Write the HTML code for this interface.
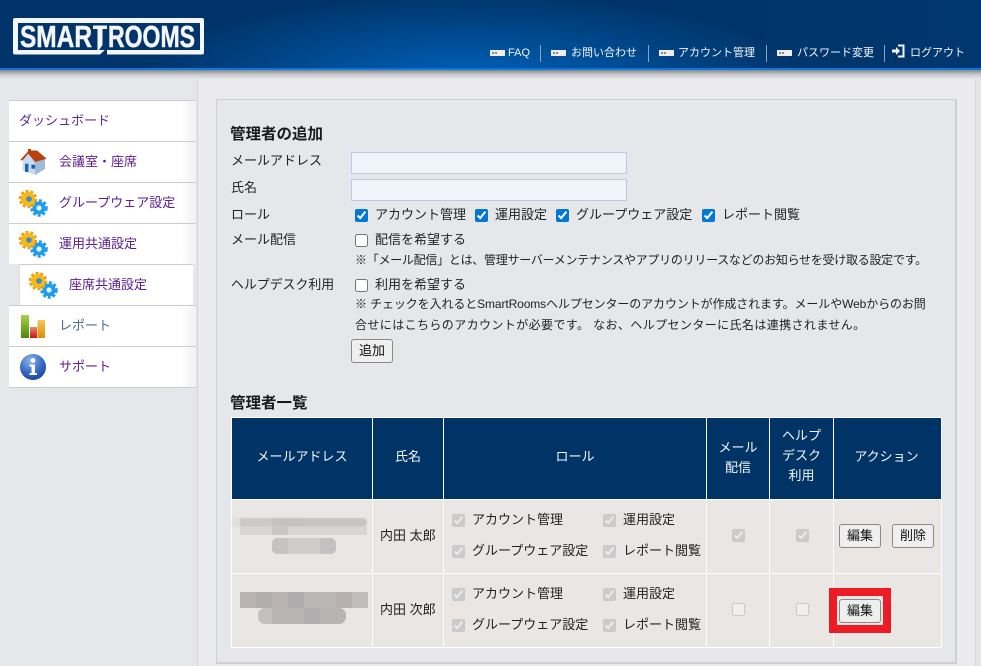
<!DOCTYPE html>
<html lang="ja"><head><meta charset="utf-8"><title>SmartRooms</title>
<style>
html,body{margin:0;padding:0;width:981px;height:666px;overflow:hidden;background:#e6e7eb}
body{position:relative;font-family:"Liberation Sans","Noto Sans CJK JP",sans-serif;font-size:13px;color:#222}
.a{position:absolute}
.t{position:absolute;white-space:nowrap;line-height:22px;height:22px}
#hd{left:0;top:0;width:981px;height:68px;background:radial-gradient(ellipse 330px 85px at 470px 80px,#0062b8 0%,#00529f 35%,rgba(0,56,108,0) 100%),linear-gradient(90deg,#00346a,#003468 60%,#00376e)}
#ln{left:0;top:68px;width:981px;height:2px;background:#0a78dc}
#sh{left:0;top:70px;width:981px;height:9px;background:linear-gradient(#85878b,#c8c9cd 50%,#e6e7eb)}
.nv{position:absolute;color:#f2f6fb;font-size:11px;line-height:16px;top:45px;white-space:nowrap}
.ic{position:absolute;top:50px;width:15px;height:6px;background:#eee}
.ic:before{content:"";position:absolute;left:2px;top:2px;width:2px;height:2px;background:#888;box-shadow:3px 0 #888}
.sp{position:absolute;top:45px;width:1px;height:17px;background:#8aa5c4}
.si{position:absolute;left:9px;width:187px;height:40px;background:linear-gradient(90deg,#fff 92%,#f1f1f3);border-top:1px solid #ccc}
.sl{position:absolute;color:#5b1a92;white-space:nowrap;line-height:22px;font-size:13px}
input{position:absolute;margin:0;width:13px;height:13px}
.in{position:absolute;left:351px;width:274px;height:20px;background:#f0f3f9;border:1px solid #bccbe2}
.b{position:absolute;width:40px;height:22px;border:1px solid #8a8a8a;border-radius:3px;background:#efefef;text-align:center;line-height:22px;font-size:13px;color:#111}
.c{position:absolute;text-align:center;color:#f3f6fa;font-size:13px;line-height:20px}
.v{position:absolute;background:#fff}
.h{position:absolute;background:#fff;left:231px;width:711px;height:1px}
.m{position:absolute}
</style></head><body>
<div class="a" style="left:197px;top:79px;width:778px;height:587px;background:#ebebee;border-left:1px solid #d6d6d9"></div>
<div class="a" style="left:975px;top:79px;width:6px;height:587px;background:#e4e5e9;border-left:1px solid #d8d8db"></div>
<div class="a" id="hd"></div><div class="a" id="ln"></div><div class="a" id="sh"></div>

<svg class="a" style="left:12px;top:17px" width="194" height="39" viewBox="0 0 194 39">
<rect x="1" y="1" width="191" height="36.5" rx="2" fill="#f4f6fa"/>
<rect x="6" y="6" width="182" height="27" fill="#00346a"/>
<text x="8" y="30" font-family="Liberation Sans" font-weight="bold" font-size="31" fill="#f4f6fa" stroke="#f4f6fa" stroke-width=".5" textLength="72" lengthAdjust="spacingAndGlyphs">SMAR</text>
<text x="96" y="30" font-family="Liberation Sans" font-weight="bold" font-size="31" fill="#f4f6fa" stroke="#f4f6fa" stroke-width=".5" textLength="87" lengthAdjust="spacingAndGlyphs">ROOMS</text>
<path d="M81 8H95V11.5H90.5V28Q90.5 33 85 35" stroke="none" fill="none"/>
<path d="M81 8.5H95V12H90.5V28L87 33H85.5V12H81Z" fill="#f4f6fa"/>
<path d="M88 37.5L95 31V37.5Z" fill="#00346a"/>
<path d="M84 33H90L86 37Z" fill="#f4f6fa"/>
</svg>

<div class="ic" style="left:490px"></div><div class="nv" style="left:508px">FAQ</div><div class="sp" style="left:540px"></div>
<div class="ic" style="left:551px"></div><div class="nv" style="left:571px">お問い合わせ</div><div class="sp" style="left:648px"></div>
<div class="ic" style="left:659px"></div><div class="nv" style="left:678px">アカウント管理</div><div class="sp" style="left:766px"></div>
<div class="ic" style="left:777px"></div><div class="nv" style="left:797px">パスワード変更</div><div class="sp" style="left:884px"></div>
<svg class="a" style="left:892px;top:44px" width="13" height="14" viewBox="0 0 13 14"><path d="M0 5.5H4V3L8 7 4 11V8.5H0Z" fill="#f2f6fb"/><path d="M6 1.5H11.5V12.5H6" stroke="#f2f6fb" stroke-width="2" fill="none"/></svg>
<div class="nv" style="left:910px">ログアウト</div>

<!-- sidebar -->
<div class="si" style="top:100px"></div><div class="si" style="top:141px"></div><div class="si" style="top:182px"></div><div class="si" style="top:223px"></div>
<div class="si" style="top:264px;left:20px;width:173px;background:#fff;box-shadow:-1px 0 0 #ddd"></div>
<div class="si" style="top:305px"></div><div class="si" style="top:346px;height:40px;border-bottom:1px solid #ccc"></div>
<div class="sl" style="left:19px;top:110px;color:#5f2d91">ダッシュボード</div>
<div class="sl" style="left:59px;top:151px">会議室・座席</div>
<div class="sl" style="left:59px;top:192px">グループウェア設定</div>
<div class="sl" style="left:59px;top:233px">運用共通設定</div>
<div class="sl" style="left:69px;top:274px">座席共通設定</div>
<div class="sl" style="left:59px;top:315px;color:#4c6a8c">レポート</div>
<div class="sl" style="left:59px;top:356px">サポート</div>

<svg class="a" style="left:19px;top:148px" width="29" height="28" viewBox="0 0 29 28">
<path d="M3.7 12.3L9.3 5.7 16 14V27L3.7 22.3Z" fill="#c7dcf0"/>
<path d="M16 14L26 11V21L16 27Z" fill="#9dbcd8"/>
<path d="M1 12.3L9 3.5V1H12V2.5H18L27.7 10.7 16 14 9.3 5.7 3.7 12.3Z" fill="#b9400f"/>
<rect x="6" y="15.7" width="3.4" height="8.3" fill="#1e62ad"/><rect x="12.4" y="16.7" width="3.6" height="4" fill="#1e62ad"/></svg>

<svg width="0" height="0" style="position:absolute"><defs>
<g id="gear"><circle cx="20" cy="18" r="6.5" fill="#1e9bef"/><circle cx="20" cy="18" r="7.5" fill="none" stroke="#1e9bef" stroke-width="2.5" stroke-dasharray="3 2"/><circle cx="20" cy="18" r="2.6" fill="#e4f3ff"/><circle cx="9" cy="9" r="7" fill="#f9b815"/><circle cx="9" cy="9" r="8" fill="none" stroke="#f1a00c" stroke-width="2.5" stroke-dasharray="3 2"/><circle cx="10" cy="9" r="2.8" fill="#3e8ad0"/></g>
</defs></svg>
<svg class="a" style="left:19px;top:190px" width="29" height="27" viewBox="0 0 29 27"><use href="#gear"/></svg>
<svg class="a" style="left:19px;top:231px" width="29" height="27" viewBox="0 0 29 27"><use href="#gear"/></svg>
<svg class="a" style="left:29px;top:272px" width="29" height="27" viewBox="0 0 29 27"><use href="#gear"/></svg>

<svg class="a" style="left:21px;top:315px" width="26" height="24" viewBox="0 0 26 24">
<defs><linearGradient id="g1" x1="0" y1="0" x2="0" y2="1"><stop offset="0" stop-color="#a6d34c"/><stop offset="1" stop-color="#4b8a08"/></linearGradient><linearGradient id="g2" x1="0" y1="0" x2="0" y2="1"><stop offset="0" stop-color="#e98a6c"/><stop offset="1" stop-color="#c4160d"/></linearGradient><linearGradient id="g3" x1="0" y1="0" x2="0" y2="1"><stop offset="0" stop-color="#f5c95a"/><stop offset="1" stop-color="#de8a08"/></linearGradient><radialGradient id="g4" cx=".4" cy=".25" r=".85"><stop offset="0" stop-color="#8fb4ea"/><stop offset=".6" stop-color="#2f64c0"/><stop offset="1" stop-color="#1a3f96"/></radialGradient></defs>
<rect x="0" y="0" width="8" height="23" fill="url(#g1)"/><rect x="9" y="12" width="7" height="11" fill="url(#g2)"/><rect x="16.5" y="5" width="7.5" height="18" fill="url(#g3)"/></svg>

<svg class="a" style="left:19px;top:353px" width="28" height="28" viewBox="0 0 28 28"><circle cx="14" cy="14" r="13" fill="url(#g4)"/><circle cx="14" cy="7.5" r="2.4" fill="#fff"/><path d="M10.5 11.5H16V20H18V22H10.5V20H12.5V13.5H10.5Z" fill="#fff"/></svg>

<!-- main panel -->
<div class="a" style="left:216px;top:99px;width:738px;height:562px;background:#e6e7eb;border:1px solid #cfcfd2;border-width:1px 2px 2px 1px"></div>

<div class="t" style="left:230px;top:124px;font-size:15.5px;font-weight:bold;color:#1a1a1a">管理者の追加</div>
<div class="t" style="left:231px;top:150px">メールアドレス</div>
<div class="t" style="left:231px;top:177px">氏名</div>
<div class="t" style="left:231px;top:204px">ロール</div>
<div class="t" style="left:231px;top:229px">メール配信</div>
<div class="t" style="left:231px;top:274px;font-size:12.9px">ヘルプデスク利用</div>
<div class="in" style="top:152px"></div><div class="in" style="top:179px"></div>

<input type="checkbox" checked style="left:355px;top:209px;accent-color:#0078d7">
<div class="t" style="left:375px;top:204px">アカウント管理</div>
<input type="checkbox" checked style="left:475px;top:209px;accent-color:#0078d7">
<div class="t" style="left:495px;top:204px">運用設定</div>
<input type="checkbox" checked style="left:556px;top:209px;accent-color:#0078d7">
<div class="t" style="left:576px;top:204px">グループウェア設定</div>
<input type="checkbox" checked style="left:702px;top:209px;accent-color:#0078d7">
<div class="t" style="left:722px;top:204px">レポート閲覧</div>
<input type="checkbox" style="left:355px;top:234px">
<div class="t" style="left:375px;top:229px">配信を希望する</div>
<div class="t" style="left:355px;top:249px;font-size:12px;letter-spacing:-.27px">※「メール配信」とは、管理サーバーメンテナンスやアプリのリリースなどのお知らせを受け取る設定です。</div>
<input type="checkbox" style="left:355px;top:279px">
<div class="t" style="left:375px;top:274px">利用を希望する</div>
<div class="t" style="left:355px;top:293px;font-size:12px;letter-spacing:-.11px">※ チェックを入れるとSmartRoomsヘルプセンターのアカウントが作成されます。メールやWebからのお問</div>
<div class="t" style="left:355px;top:314px;font-size:12px;letter-spacing:.4px">合せにはこちらのアカウントが必要です。 なお、ヘルプセンターに氏名は連携されません。</div>
<div class="b" style="left:351px;top:339px">追加</div>

<div class="t" style="left:230px;top:393px;font-size:15.5px;font-weight:bold;color:#1a1a1a">管理者一覧</div>

<!-- table -->
<div class="a" style="left:231px;top:417px;width:711px;height:82px;background:#003366"></div>
<div class="a" style="left:231px;top:499px;width:711px;height:149px;background:#e9e6e4"></div>
<div class="h" style="top:417px"></div><div class="h" style="top:499px"></div><div class="h" style="top:573px"></div><div class="h" style="top:647px"></div>
<div class="v" style="left:231px;top:417px;width:1px;height:231px"></div>
<div class="v" style="left:372px;top:417px;width:1px;height:231px"></div>
<div class="v" style="left:443px;top:417px;width:1px;height:231px"></div>
<div class="v" style="left:706px;top:417px;width:1px;height:231px"></div>
<div class="v" style="left:769px;top:417px;width:1px;height:231px"></div>
<div class="v" style="left:833px;top:417px;width:1px;height:231px"></div>
<div class="v" style="left:941px;top:417px;width:1px;height:231px"></div>

<div class="c" style="left:232px;width:140px;top:447px">メールアドレス</div>
<div class="c" style="left:373px;width:70px;top:447px">氏名</div>
<div class="c" style="left:444px;width:262px;top:447px">ロール</div>
<div class="c" style="left:707px;width:62px;top:438px">メール<br>配信</div>
<div class="c" style="left:770px;width:63px;top:426px">ヘルプ<br>デスク<br>利用</div>
<div class="c" style="left:834px;width:105px;top:447px">アクション</div>

<!-- mosaics -->
<div class="m" style="left:232px;top:518px;width:135px;height:9px;border-radius:4px;filter:blur(.6px);background:linear-gradient(90deg,#e3e0df 0 8px,#ccc9c8 8px 40px,#c6c2c0 40px 72px,#c8c5c5 72px 135px)"></div>
<div class="m" style="left:240px;top:527px;width:127px;height:8px;background:#d8d5d4"></div>
<div class="m" style="left:272px;top:527px;width:16px;height:8px;background:#c9c6c5"></div>
<div class="m" style="left:272px;top:538px;width:64px;height:16px;background:linear-gradient(90deg,#c6c3c2 0 16px,#cfccca 16px 48px,#c4c1c3 48px 64px);border-radius:5px"></div>
<div class="m" style="left:240px;top:592px;width:128px;height:16px;background:linear-gradient(90deg,#b8b3b1 0 16px,#b1aeae 16px 32px,#b9b4b1 32px 48px,#aeacad 48px 64px,#b9b6b3 64px 96px,#b5b0ad 96px 112px,#c0bdbc 112px 128px)"></div>
<div class="m" style="left:258px;top:608px;width:88px;height:16px;background:linear-gradient(90deg,#c2bfbe 0 14px,#b9b5b3 14px 46px,#b1aeb0 46px 62px,#b8b4b2 62px 88px);border-radius:7px"></div>

<div class="t" style="left:380px;top:525px">内田 太郎</div>
<div class="t" style="left:380px;top:599px">内田 次郎</div>

<input type="checkbox" checked disabled style="left:452px;top:514px"><div class="t" style="left:472px;top:509px">アカウント管理</div>
<input type="checkbox" checked disabled style="left:603px;top:514px"><div class="t" style="left:623px;top:509px">運用設定</div>
<input type="checkbox" checked disabled style="left:452px;top:545px"><div class="t" style="left:472px;top:540px">グループウェア設定</div>
<input type="checkbox" checked disabled style="left:603px;top:545px"><div class="t" style="left:623px;top:540px">レポート閲覧</div>
<input type="checkbox" checked disabled style="left:452px;top:588px"><div class="t" style="left:472px;top:583px">アカウント管理</div>
<input type="checkbox" checked disabled style="left:603px;top:588px"><div class="t" style="left:623px;top:583px">運用設定</div>
<input type="checkbox" checked disabled style="left:452px;top:619px"><div class="t" style="left:472px;top:614px">グループウェア設定</div>
<input type="checkbox" checked disabled style="left:603px;top:619px"><div class="t" style="left:623px;top:614px">レポート閲覧</div>

<input type="checkbox" checked disabled style="left:732px;top:529px">
<input type="checkbox" checked disabled style="left:796px;top:529px">
<input type="checkbox" disabled style="left:732px;top:603px">
<input type="checkbox" disabled style="left:796px;top:603px">

<div class="b" style="left:839px;top:524px">編集</div>
<div class="b" style="left:892px;top:524px">削除</div>
<div class="a" style="left:829px;top:588px;width:46px;height:29px;border:8px solid #ed1c24"></div>
<div class="b" style="left:839px;top:599px">編集</div>
</body></html>
